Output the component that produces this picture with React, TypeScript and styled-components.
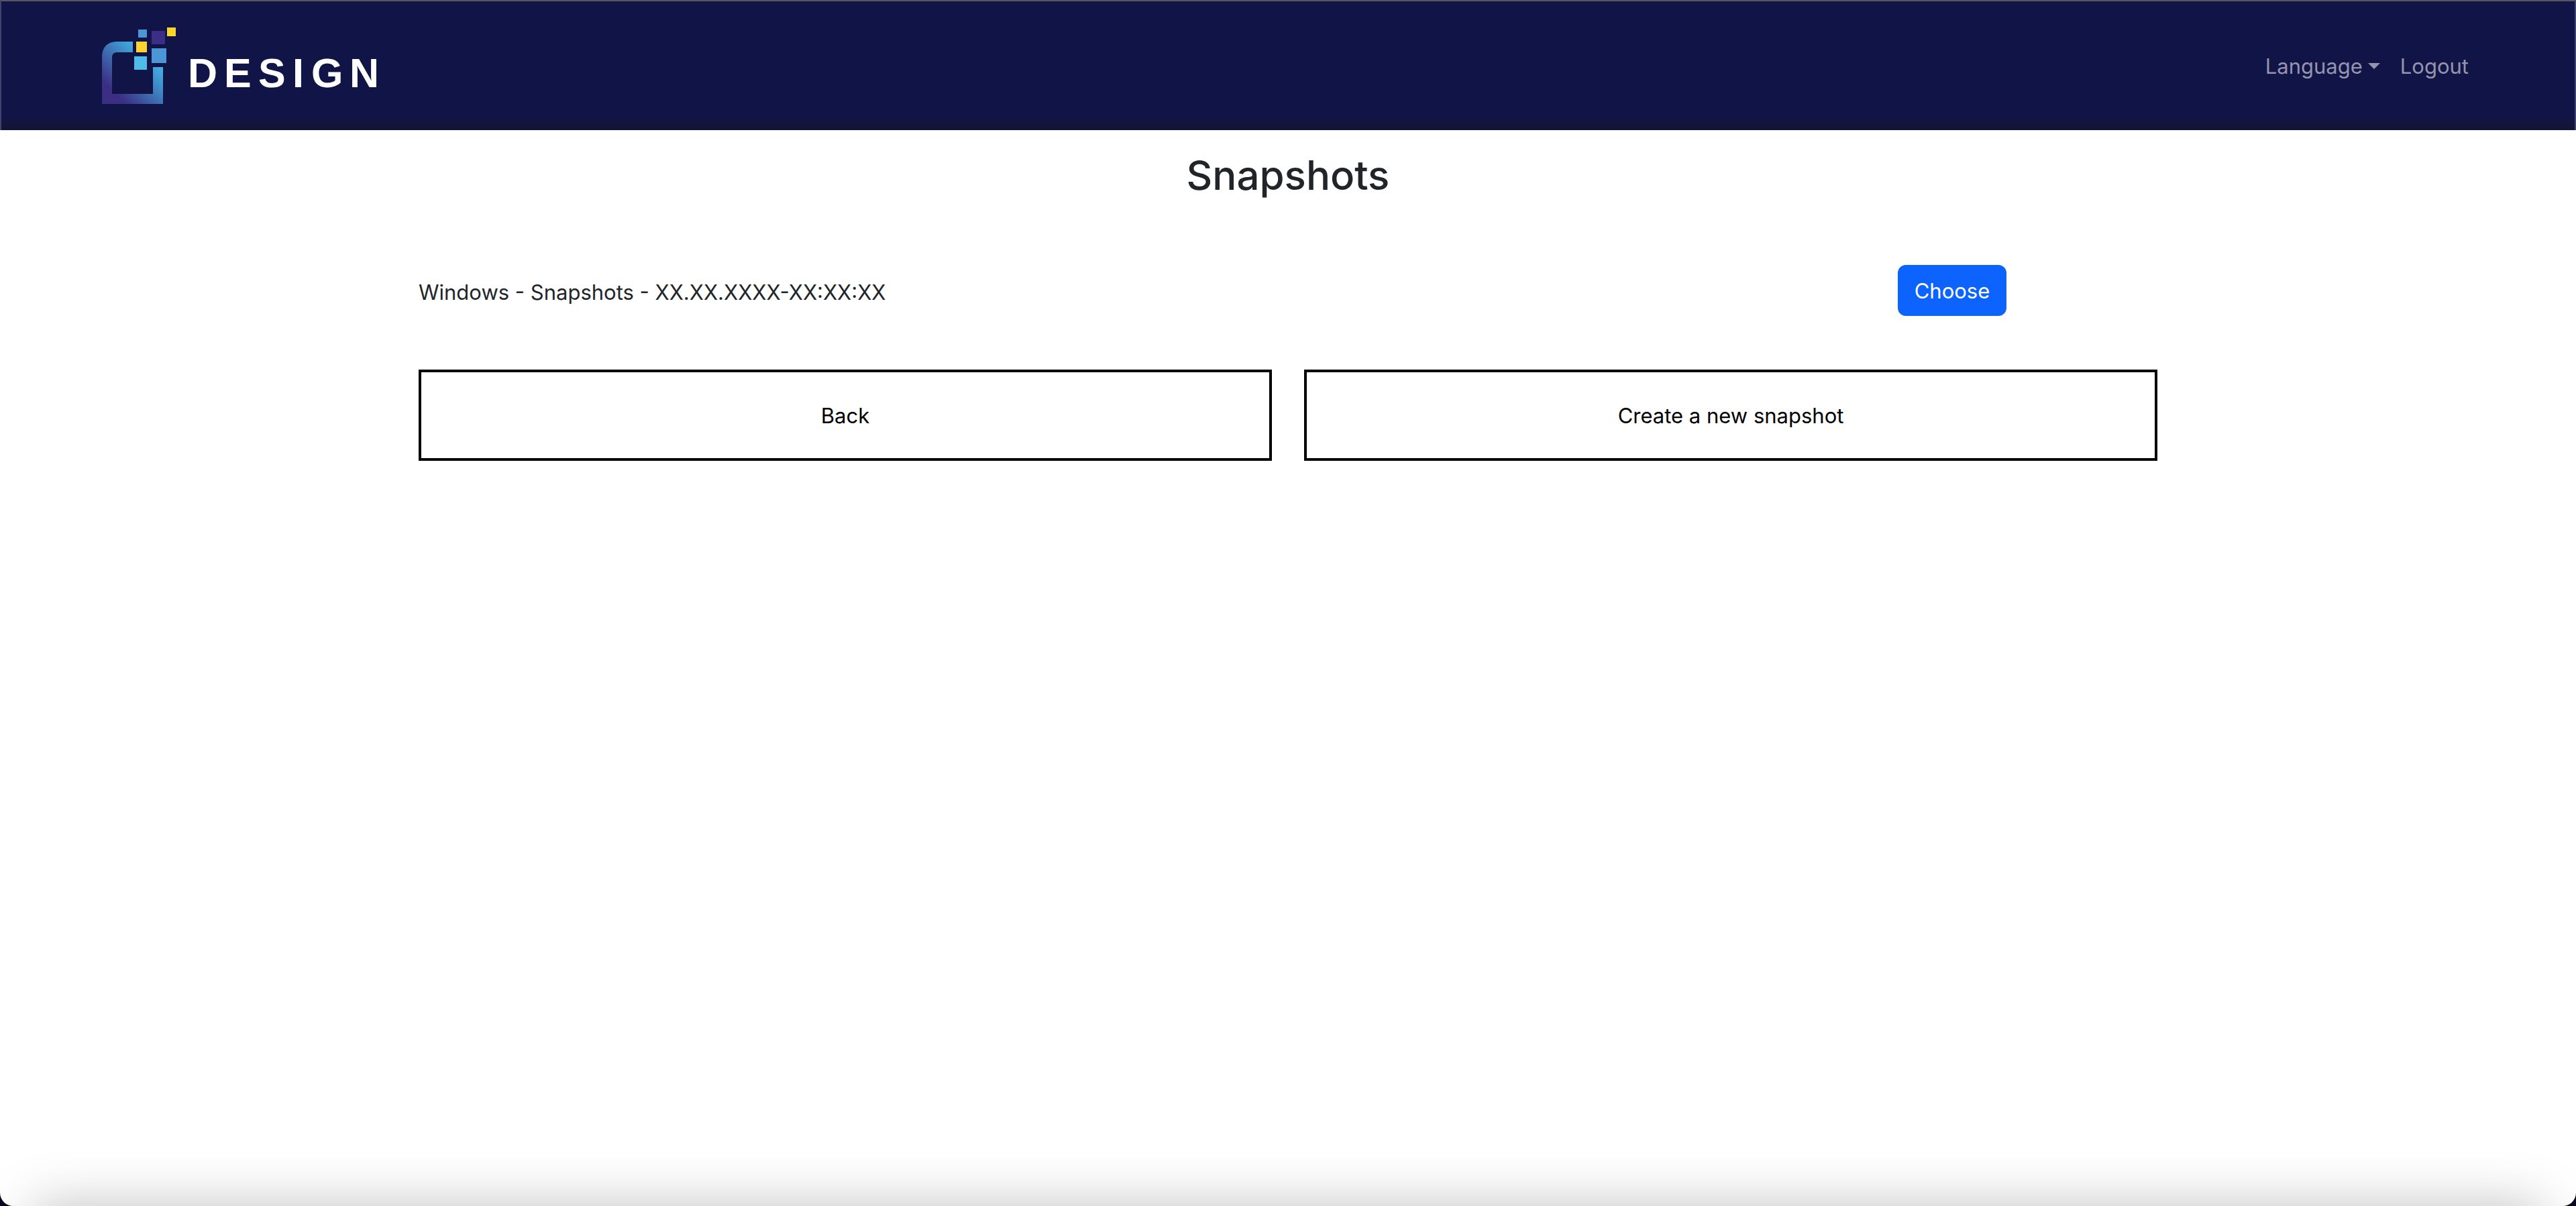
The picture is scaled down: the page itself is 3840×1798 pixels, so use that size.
import React from "react";
import styled, { createGlobalStyle } from "styled-components";

const GlobalStyle = createGlobalStyle`
  *, *::before, *::after { box-sizing: border-box; }
  body {
    margin: 0;
    background: #0c0220;
    color: #212529;
    font-family: Inter, "Liberation Sans", sans-serif;
    font-size: 31px;
    line-height: 48px;
  }
  button { font: inherit; cursor: pointer; }
`;

const Page = styled.div`
  min-height: 100vh;
  overflow: hidden;
  display: flex;
  flex-direction: column;
  background: #fff;
  border-radius: 0 0 20px 20px;
`;

const Header = styled.header`
  display: flex;
  align-items: center;
  justify-content: space-between;
  height: 194px;
  padding: 0 158px 0 150px;
  border: 2px solid #40426a;
  border-top-color: #58585c;
  border-bottom: 0;
  background: linear-gradient(#111446 176px, #13153b 176px, #13153b 184px, #101238);
`;

const Brand = styled.a`
  display: flex;
  text-decoration: none;
`;

const Nav = styled.nav`
  display: flex;
  gap: 30px;
  padding-top: 2px;
`;

const navItem = `
  display: flex;
  align-items: center;
  padding: 0;
  border: 0;
  background: none;
  color: #9594ae;
  text-decoration: none;
`;

const NavButton = styled.button`
  ${navItem}
  gap: 8px;
`;

const NavLink = styled.a`
  ${navItem}
`;

const Caret = styled.span`
  border: 9px solid transparent;
  border-top-color: currentColor;
  border-bottom: 0;
  margin-bottom: 2px;
`;

const Main = styled.main`
  width: 100%;
  max-width: 2640px;
  margin: 0 auto;
  padding: 29px 24px 0;
`;

const Title = styled.h1`
  margin: 0 0 96px;
  font-size: 60px;
  font-weight: 500;
  line-height: 76px;
  text-align: center;
`;

const SnapshotList = styled.ul`
  margin: 0 -24px;
  padding: 0;
  list-style: none;
`;

const SnapshotRow = styled.li`
  display: grid;
  grid-template-columns: 10fr 1fr 1fr;
  align-items: center;
`;

const SnapshotName = styled.span`
  padding: 6px 24px 0;
`;

const ChooseButton = styled.button`
  justify-self: center;
  padding: 13px 23px 11px;
  border: 2px solid #0d63fd;
  border-radius: 12px;
  background: #0d63fd;
  color: #fff;
`;

const Actions = styled.div`
  display: grid;
  grid-template-columns: 1fr 1fr;
  gap: 48px;
  margin-top: 80px;
`;

const ActionButton = styled.button`
  padding: 41px 40px 39px;
  border: 4px solid #000;
  background: #fff;
  color: #000;
`;

const BottomShade = styled.div`
  height: 80px;
  margin-top: auto;
  overflow: hidden;
  display: flex;
  align-items: flex-end;

  &::after {
    content: "";
    flex: 1;
    height: 100px;
    margin: 0 50px -100px;
    box-shadow: 0 0 80px rgba(0, 0, 0, 0.25);
  }
`;

const Logo = () => (
  <svg width="416" height="120" viewBox="0 0 416 120" role="img" aria-label="Design">
    <defs>
      <linearGradient id="frame" gradientUnits="userSpaceOnUse" x1="12" y1="106" x2="72" y2="46">
        <stop offset="0" stopColor="#3b2e83" />
        <stop offset="0.1" stopColor="#3b2e83" />
        <stop offset="0.8" stopColor="#3f96d0" />
        <stop offset="1" stopColor="#48aee0" />
      </linearGradient>
    </defs>
    <path
      fill="url(#frame)"
      d="M46 24H22Q0 25 0 47V117H91V62H76V102H15V48Q15 40 22 40H46Z"
    />
    <rect x="54" y="6" width="13" height="12" fill="#4b97d5" />
    <rect x="74" y="8" width="20" height="20" fill="#3a2f84" />
    <rect x="97" y="3" width="13" height="13" fill="#fdd330" />
    <rect x="51" y="24" width="16" height="16" fill="#fdd330" />
    <rect x="74" y="34" width="22" height="22" fill="#4b97d5" />
    <rect x="48" y="46" width="19" height="20" fill="#50bbe9" />
    <text
      y="92"
      x="128 182 233 284 312 369"
      fill="#fff"
      fontFamily="Liberation Sans, sans-serif"
      fontWeight="700"
      fontSize="61"
    >
      DESIGN
    </text>
  </svg>
);

const snapshots = ["Windows - Snapshots - XX.XX.XXXX-XX:XX:XX"];

export default function App() {
  return (
    <>
      <GlobalStyle />
      <Page>
        <Header>
          <Brand href="#">
            <Logo />
          </Brand>
          <Nav>
            <NavButton type="button" aria-haspopup="menu">
              Language
              <Caret />
            </NavButton>
            <NavLink href="#logout">Logout</NavLink>
          </Nav>
        </Header>
        <Main>
          <Title>Snapshots</Title>
          <SnapshotList>
            {snapshots.map((name) => (
              <SnapshotRow key={name}>
                <SnapshotName>{name}</SnapshotName>
                <ChooseButton type="button">Choose</ChooseButton>
              </SnapshotRow>
            ))}
          </SnapshotList>
          <Actions>
            <ActionButton type="button">Back</ActionButton>
            <ActionButton type="button">Create a new snapshot</ActionButton>
          </Actions>
        </Main>
        <BottomShade />
      </Page>
    </>
  );
}
